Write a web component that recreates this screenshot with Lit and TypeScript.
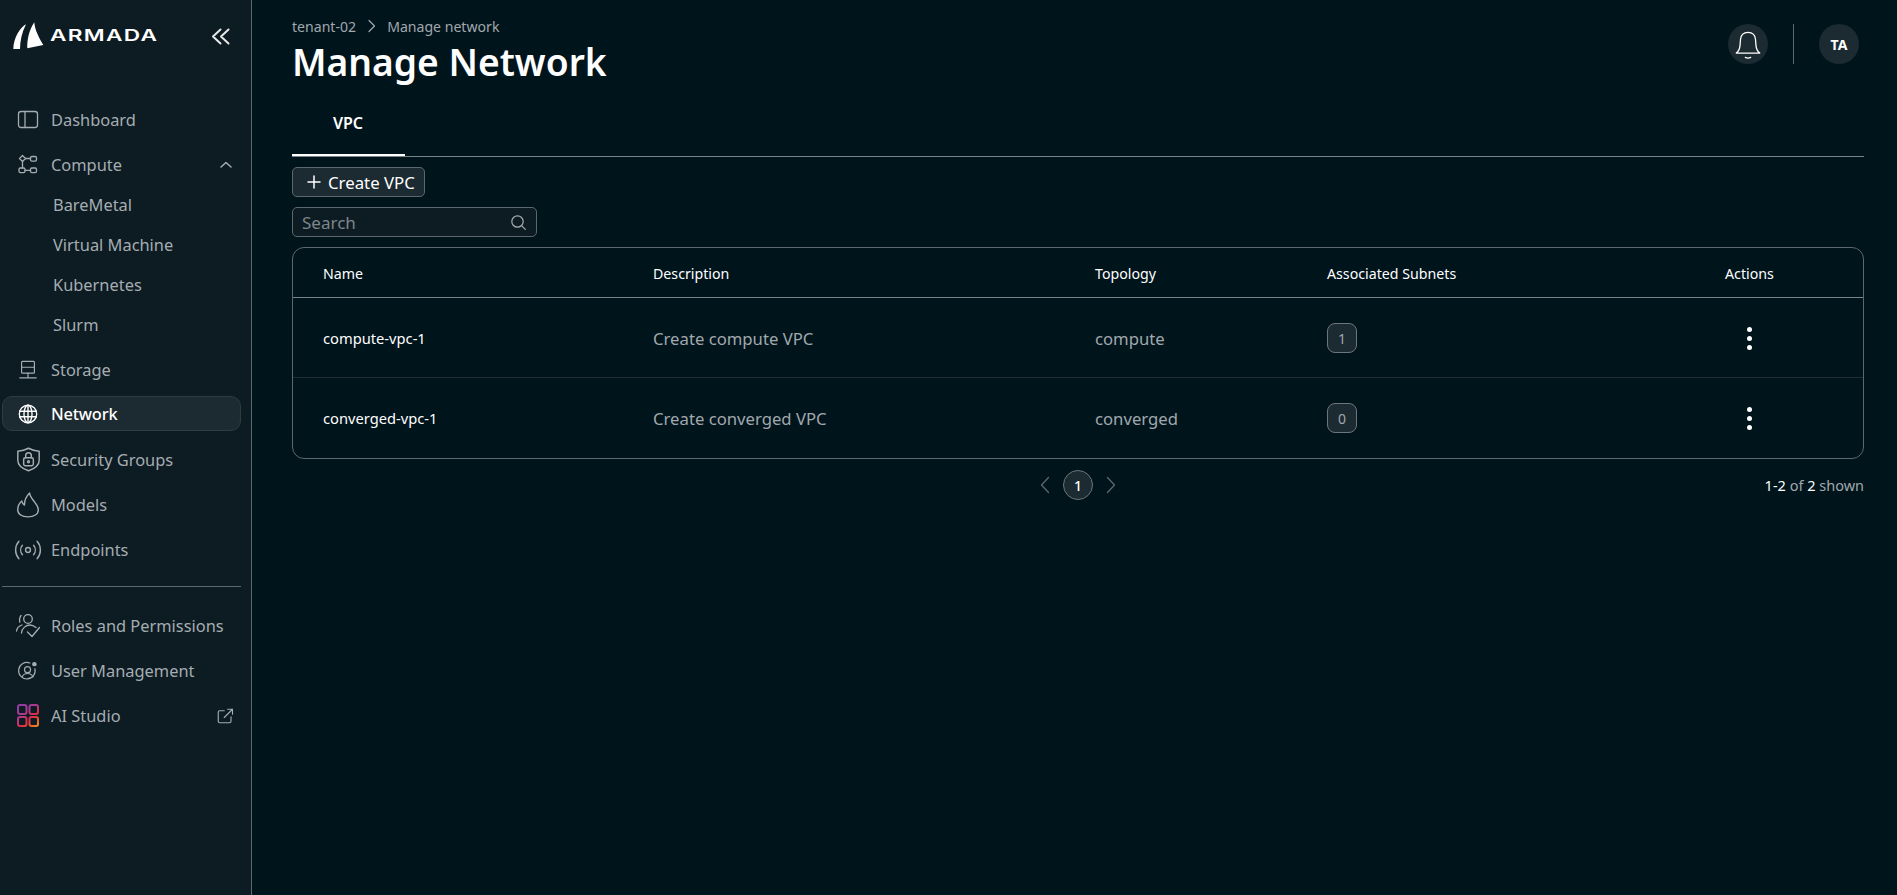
import {LitElement, html, svg, css} from "lit"
import {customElement} from "lit/decorators.js"

const stroke = (body: any, size = 24, box = "0 0 24 24", w = 1.3) => html`
    <svg width="${size}" height="${size}" viewBox="${box}" fill="none" stroke="currentColor"
        stroke-width="${w}" stroke-linecap="round" stroke-linejoin="round">${body}</svg>`

const icons: Record<string, any> = {
    dashboard: stroke(svg`<rect x="2.5" y="3.5" width="19" height="16" rx="2.5"/><path d="M9 3.5v16"/>`, 24),
    compute: stroke(svg`
        <path d="M6.5 2.5l3 3-3 3-3-3z"/><rect x="14.5" y="3.5" width="6" height="4.6" rx="1.4"/>
        <rect x="3" y="15" width="6" height="4.6" rx="1.4"/><rect x="14.5" y="15" width="6" height="4.6" rx="1.4"/>
        <path d="M9.5 5.5h5M6.5 8.5V15M9 17.3h5.5"/>`, 24),
    storage: stroke(svg`
        <rect x="5" y="2.5" width="14" height="13" rx="1"/><path d="M5 9h14M12 15.5v4M3 20.5h18"/>`, 22),
    network: stroke(svg`
        <circle cx="12" cy="12" r="9.5"/><ellipse cx="12" cy="12" rx="4.4" ry="9.5"/>
        <path d="M12 2.5v19M2.8 9h18.4M2.8 15h18.4"/>`, 22, "0 0 24 24", 1.5),
    security: stroke(svg`
        <path d="M12 2c3 1.6 6 2.4 9.5 2.6v8c0 4.6-4 7.5-9.5 9.4-5.5-1.9-9.5-4.8-9.5-9.4v-8C6 4.400 9 3.600 12 2z"/>
        <rect x="7.700" y="10.500" width="8.600" height="7" rx="1.500"/><path d="M9.500 10.500V8.500a2.500 2.500 0 0 1 5 0v2"/>
        <circle cx="12" cy="14" r=".8"/>`, 27),
    models: stroke(svg`
        <path d="M13.500 1c.2 3.500 2.800 5.800 5 8.800 1.800 2.300 3 4.400 3 6.700C21.500 20.500 17.500 23 12 23S2.500 20.500 2.500 16.300C2.500 12.800 4 10.300 6.300 8.300c.3 2 1 3 2.500 3.700C8.600 8 10.500 4 13.500 1z"/>`, 26),
    endpoints: stroke(svg`
        <circle cx="14" cy="12" r="2.300"/>
        <path d="M8.800 7.500a7 7 0 0 0 0 9M19.200 7.500a7 7 0 0 1 0 9M5.500 3.800a12.500 12.500 0 0 0 0 16.400M22.500 3.800a12.500 12.500 0 0 1 0 16.400"/>`, 30, "0 0 28 24"),
    roles: stroke(svg`
        <circle cx="12" cy="5" r="4.300"/>
        <path d="M5 1.500C3.800 3 3.300 5.500 3.800 8M.5 17C1 13.500 3 12 6 11M5.500 19C6 14 10 11 14 11c2 0 4 1 6 2.500M11.500 18l4.500 4.500 7.500-9"/>`, 24),
    users: stroke(svg`
        <path d="M19.500 9.500A9 9 0 1 1 14 3.300"/><circle cx="11.500" cy="10.500" r="3.300"/>
        <path d="M5.500 18.500c1-2.500 3.200-3.800 6-3.800s5 1.300 6 3.800"/>
        <circle cx="19" cy="4.500" r="1.800" fill="currentColor"/>`, 22),
}

const studio = html`
    <svg width="22" height="23" viewBox="0 0 22 23" fill="none" stroke-width="2">
        <defs>
            <linearGradient id="ai2" gradientUnits="userSpaceOnUse" x1="2" y1="0" x2="20" y2="23">
                <stop offset="0" stop-color="#8f3ba6"/>
                <stop offset=".35" stop-color="#a93a90"/>
                <stop offset=".65" stop-color="#e02c45"/>
                <stop offset="1" stop-color="#f78a1e"/>
            </linearGradient>
        </defs>
        <rect x="1" y="1" width="8.500" height="9" rx="2" stroke="url(#ai2)"/>
        <rect x="12.500" y="1" width="8.500" height="9" rx="2" stroke="url(#ai2)"/>
        <rect x="1" y="13" width="8.500" height="9" rx="2" stroke="url(#ai2)"/>
        <rect x="12.500" y="13" width="8.500" height="9" rx="2" stroke="url(#ai2)"/>
    </svg>`

const logo = html`
    <svg width="31" height="28" viewBox="0 0 31 28" fill="#fff">
        <path d="M.3 27C.5 15 8 5 13 2.300 9 10 7 19 7 27z"/>
        <path d="M21.300 .3C16 8 14 18 14.300 26.300L30.300 23C25 14 22 8 21.300 .3z"/>
    </svg>`

@customElement("side-nav")
export class SideNav extends LitElement {
    static styles = css`
        :host {
            display: block;
            width: 252px;
            flex: none;
            min-height: 895px;
            box-sizing: border-box;
            background: #0d1b22;
            border-right: 1px solid #5d686e;
            font-family: "Noto Sans", sans-serif;
            color: #a5adb2;
        }
        .brand {
            display: flex;
            align-items: center;
            height: 28px;
            padding: 22px 21px 0 13px;
        }
        .brand-name {
            margin-left: 6px;
            font: 600 15.500px/1 Inter, sans-serif;
            letter-spacing: .9px;
            color: #fff;
            transform: scaleX(1.460);
            transform-origin: left center;
        }
        .collapse {
            margin-left: auto;
            color: #e6e9ea;
            display: flex;
        }
        nav {
            display: flex;
            flex-direction: column;
            gap: 10px;
            margin: 52px 10px 0 2px;
        }
        .item {
            display: flex;
            align-items: center;
            height: 35px;
            box-sizing: border-box;
            padding-left: 11px;
            font-size: 16.400px;
            border: 1px solid transparent;
            border-radius: 10px;
        }
        .item.active {
            margin: -1px 0 1px;
            background: #1c2a31;
            border-color: #2f3b41;
            color: #fff;
            font-weight: 500;
            letter-spacing: -.2px;
        }
        .slot {
            width: 28px;
            margin-right: 9px;
            display: flex;
            justify-content: center;
            flex: none;
        }
        .slot svg {
            flex: none;
        }
        .tail {
            margin-left: auto;
            margin-right: 6px;
            display: flex;
        }
        .subs {
            display: flex;
            flex-direction: column;
            gap: 5px;
            margin-top: -5px;
        }
        .sub {
            height: 35px;
            line-height: 35px;
            padding-left: 51px;
            font-size: 16.400px;
        }
        hr {
            border: 0;
            border-top: 1px solid #5d686e;
            margin: 9px 0 11px;
        }
    `

    item(label: string, icon: any, tail: any = "", active = false) {
        return html`
            <div class="item ${active ? "active" : ""}">
                <span class="slot">${icon}</span>${label}
                ${tail ? html`<span class="tail">${tail}</span>` : ""}
            </div>`
    }

    render() {
        const up = stroke(svg`<path d="M3 10l5-4.500L13 10"/>`, 16, "0 0 16 16", 1.500)
        const out = stroke(svg`
            <path d="M11 5H5a2 2 0 0 0-2 2v12a2 2 0 0 0 2 2h13a2 2 0 0 0 2-2v-6"/>
            <path d="M11 14L22 3M15.500 3H22v6.500"/>`, 18, "0 0 24 24", 1.500)
        return html`
            <div class="brand">
                ${logo}
                <span class="brand-name">ARMADA</span>
                <span class="collapse">
                    ${stroke(svg`<path d="M9.500 2.500L2 9.500l7.500 7M17.500 2.500L10 9.500l7.500 7"/>`, 19, "0 0 19 19", 2)}
                </span>
            </div>
            <nav>
                ${this.item("Dashboard", icons.dashboard)}
                ${this.item("Compute", icons.compute, up)}
                <div class="subs">
                    ${["BareMetal", "Virtual Machine", "Kubernetes", "Slurm"].map(s => html`<div class="sub">${s}</div>`)}
                </div>
                ${this.item("Storage", icons.storage)}
                ${this.item("Network", icons.network, "", true)}
                ${this.item("Security Groups", icons.security)}
                ${this.item("Models", icons.models)}
                ${this.item("Endpoints", icons.endpoints)}
                <hr />
                ${this.item("Roles and Permissions", icons.roles)}
                ${this.item("User Management", icons.users)}
                ${this.item("AI Studio", studio, out)}
            </nav>
        `
    }
}

@customElement("app-root")
export class AppRoot extends LitElement {
    static styles = css`
        :host {
            display: flex;
            min-height: 895px;
            background: #00141c;
            font-family: "Noto Sans", sans-serif;
            color: #fff;
        }
        main {
            flex: 1;
            padding: 0 33px 0 40px;
            min-width: 0;
        }
        .top {
            display: flex;
            justify-content: space-between;
            align-items: flex-start;
            height: 91px;
        }
        .crumbs {
            display: flex;
            align-items: center;
            padding-top: 16px;
            height: 20px;
            font-size: 14.100px;
            color: #a0a8ad;
        }
        .crumbs svg {
            margin: 0 8px 0 9px;
        }
        h1 {
            margin: 0;
            font-size: 37.200px;
            line-height: 52px;
            font-weight: 600;
        }
        .tools {
            display: flex;
            align-items: center;
            margin: 24px 5px 0 0;
        }
        .round {
            width: 40px;
            height: 40px;
            border-radius: 50%;
            background: #1c2a31;
            display: flex;
            align-items: center;
            justify-content: center;
            font-size: 14px;
            font-weight: 700;
        }
        .sep {
            width: 1px;
            height: 40px;
            background: #5d686e;
            margin: 0 25px;
        }
        .tabs {
            height: 66px;
            border-bottom: 1px solid #7b8488;
            box-sizing: border-box;
        }
        .tab {
            width: 113px;
            height: 65px;
            box-sizing: border-box;
            border-bottom: 2px solid #fff;
            padding: 19px 1px 0 0;
            text-align: center;
            font-size: 16px;
            line-height: 26px;
            font-weight: 600;
        }
        .create {
            display: inline-flex;
            align-items: center;
            height: 30px;
            box-sizing: border-box;
            margin-top: 10px;
            padding: 0 9px 0 13px;
            gap: 6px;
            border: 1px solid #5d686e;
            border-radius: 5px;
            background: #1c2a31;
            font-size: 16.800px;
        }
        .search {
            display: flex;
            align-items: center;
            justify-content: space-between;
            width: 245px;
            height: 30px;
            box-sizing: border-box;
            margin-top: 10px;
            padding: 0 9px 0 9px;
            border: 1px solid #5d686e;
            border-radius: 5px;
            background: #0d1b22;
            font-size: 17px;
            color: #7d878c;
        }
        .search svg {
            color: #a5adb2;
        }
        .table {
            margin-top: 10px;
            border: 1px solid #5d686e;
            border-radius: 12px;
        }
        .row {
            display: grid;
            grid-template-columns: 330px 442px 232px 398px 1fr;
            align-items: center;
            padding: 1px 0 0 30px;
            height: 79px;
            box-sizing: border-box;
            font-size: 14.700px;
        }
        .row + .row + .row {
            height: 81px;
            padding-top: 0;
            border-top: 1px solid #1f2d34;
        }
        .head {
            height: 50px;
            border-bottom: 1px solid #7b8488;
            font-size: 14.200px;
        }
        .muted {
            color: #a0a8ad;
            font-size: 16.700px;
        }
        .count {
            display: flex;
            align-items: center;
            justify-content: center;
            width: 30px;
            height: 30px;
            box-sizing: border-box;
            border: 1px solid #6c767b;
            border-radius: 8px;
            background: #1c2a31;
            color: #a0a8ad;
            font-size: 14px;
        }
        .dots {
            display: flex;
            flex-direction: column;
            gap: 4px;
            width: 5px;
            margin-left: 22px;
        }
        .dots i {
            width: 5px;
            height: 5px;
            border-radius: 50%;
            background: #fff;
        }
        .foot {
            display: grid;
            grid-template-columns: 1fr auto 1fr;
            align-items: center;
            margin-top: 11px;
        }
        .pager {
            display: flex;
            align-items: center;
            gap: 9px;
            color: #5d686e;
        }
        .page {
            width: 30px;
            height: 30px;
            box-sizing: border-box;
            display: flex;
            align-items: center;
            justify-content: center;
            border: 1px solid #6c767b;
            border-radius: 50%;
            background: #1c2a31;
            color: #fff;
            font-size: 14px;
            font-weight: 500;
        }
        .shown {
            justify-self: end;
            font-size: 14.500px;
            color: #a0a8ad;
        }
        .shown b {
            color: #fff;
            font-weight: 400;
        }
    `

    render() {
        const rows = [
            ["compute-vpc-1", "Create compute VPC", "compute", "1"],
            ["converged-vpc-1", "Create converged VPC", "converged", "0"],
        ]
        return html`
            <side-nav></side-nav>
            <main>
                <div class="top">
                    <div>
                        <div class="crumbs">
                            tenant-02
                            ${stroke(svg`<path d="M4 1.500l5.500 5.500L4 12.500"/>`, 14, "0 0 14 14", 1.200)}
                            Manage network
                        </div>
                        <h1>Manage Network</h1>
                    </div>
                    <div class="tools">
                        <div class="round">
                            ${stroke(svg`
                                <path d="M3 23.500c2-1.500 3.200-3.500 3.500-7l.5-6c.4-4 3-6.500 7-6.500s6.600 2.500 7 6.500l.5 6c.3 3.500 1.500 5.500 3.500 7z"/>
                                <path d="M11.500 27.500c1.500 .8 3.500 .8 5 0"/>`, 32, "0 0 28 30", 1.200)}
                        </div>
                        <div class="sep"></div>
                        <div class="round">TA</div>
                    </div>
                </div>
                <div class="tabs"><div class="tab">VPC</div></div>
                <div class="create">
                    ${stroke(svg`<path d="M8 2v12M2 8h12"/>`, 16, "0 0 16 16", 1.500)}
                    Create VPC
                </div>
                <div class="search">
                    Search
                    ${stroke(svg`<circle cx="7.500" cy="7.500" r="5.700"/><path d="M11.800 11.800l3.500 3.500"/>`, 17, "0 0 17 17", 1.200)}
                </div>
                <div class="table">
                    <div class="row head">
                        <span>Name</span><span>Description</span><span>Topology</span><span>Associated Subnets</span><span>Actions</span>
                    </div>
                    ${rows.map(r => html`
                        <div class="row">
                            <span>${r[0]}</span>
                            <span class="muted">${r[1]}</span>
                            <span class="muted">${r[2]}</span>
                            <span class="count">${r[3]}</span>
                            <span class="dots"><i></i><i></i><i></i></span>
                        </div>`)}
                </div>
                <div class="foot">
                    <span></span>
                    <div class="pager">
                        ${stroke(svg`<path d="M10 1.500L3 9l7 7.500"/>`, 18, "0 0 13 18", 1.300)}
                        <span class="page">1</span>
                        ${stroke(svg`<path d="M3 1.500L10 9l-7 7.500"/>`, 18, "0 0 13 18", 1.300)}
                    </div>
                    <span class="shown"><b>1-2</b> of <b>2</b> shown</span>
                </div>
            </main>
        `
    }
}
